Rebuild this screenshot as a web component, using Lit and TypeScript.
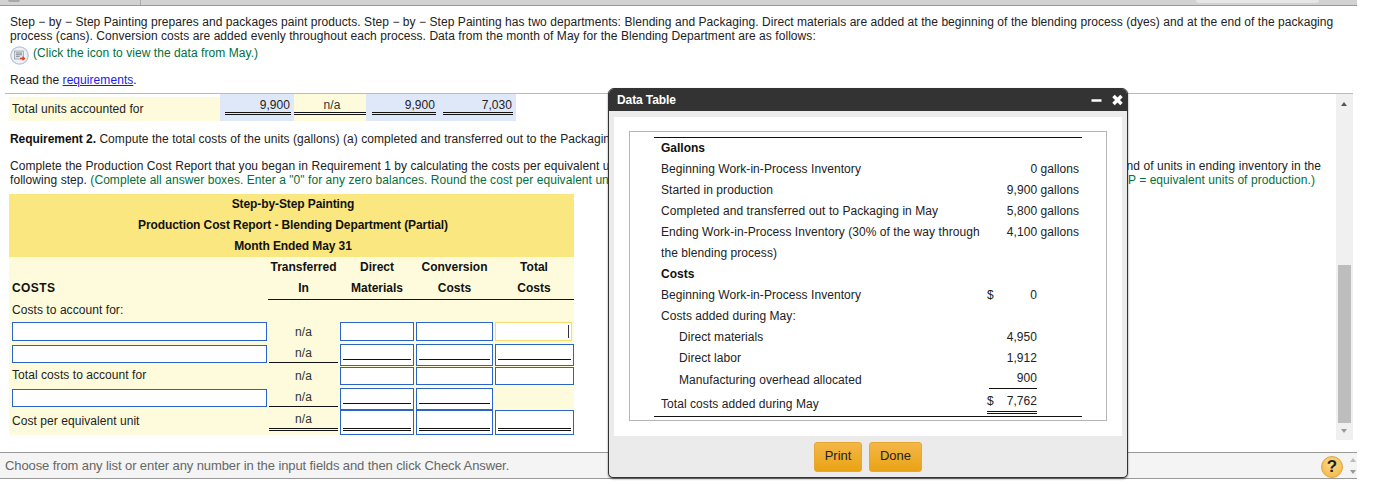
import { LitElement, html, css, nothing } from "lit";
import { customElement } from "lit/decorators.js";

type CostRow = { label: string; cls?: string; sym?: string; amt?: string; value?: string };

const dataRows: CostRow[] = [
  { label: "Gallons", cls: "b" },
  { label: "Beginning Work-in-Process Inventory", value: "0 gallons" },
  { label: "Started in production", value: "9,900 gallons" },
  { label: "Completed and transferred out to Packaging in May", value: "5,800 gallons" },
  { label: "Ending Work-in-Process Inventory (30% of the way through the blending process)", value: "4,100 gallons" },
  { label: "Costs", cls: "b" },
  { label: "Beginning Work-in-Process Inventory", sym: "$", amt: "0" },
  { label: "Costs added during May:" },
  { label: "Direct materials", cls: "ind", amt: "4,950" },
  { label: "Direct labor", cls: "ind", amt: "1,912" },
  { label: "Manufacturing overhead allocated", cls: "ind under", amt: "900" },
];

@customElement("app-root")
export class AppRoot extends LitElement {
  static styles = css`
    :host { display: block; width: 1382px; height: 484px; position: relative; overflow: hidden; background: #fff;
      font: 12px/14px "Liberation Sans", Arial, sans-serif; color: #222; letter-spacing: .06px; }
    .top { width: 1357px; height: 5px; background: #d2d2d2; border-bottom: 1px solid #999; display: flex; }
    .top .nub { width: 12px; height: 2px; margin-left: 8px; background: #a8a8a8; border-radius: 0 0 4px 4px; }
    .top .seg { width: 120px; border-right: 1px solid #aaa; }
    .top .tab { margin-left: 1055px; width: 123px; height: 3px; background: #e6e6e6; border-radius: 0 0 4px 4px; }
    .intro { padding: 9px 0 0 10px; height: 87px; box-sizing: border-box; width: 1345px; }
    .intro p { margin: 0; }
    .click { display: flex; align-items: flex-start; gap: 4px; color: #00703c; height: 20px; margin-top: 2px; }
    .click svg { margin-top: 1px; flex: none; }
    .click span { margin-top: 1px; }
    .read { margin-top: 8px !important; }
    a { color: #1a1ae6; text-decoration: underline; }
    .main { position: relative; height: 347px; margin-left: 5px; width: 1348px; border-top: 1px solid #bbb; box-sizing: border-box; padding-left: 4px; }
    .units { display: grid; grid-template-columns: 211px 74px 72px 73px 77px; height: 27px; width: 507px; }
    .units > div { display: flex; align-items: flex-start; justify-content: flex-end; position: relative; }
    .units .lab { background: #fdfbdc; margin-top: 3px; padding-left: 3px; align-items: center; justify-content: flex-start; }
    .units .bl { background: #dfe8f8; }
    .units .pl { background: #fdfbdc; }
    .units span { display: block; text-align: right; border-bottom: 3px double #111; height: 14px; line-height: 14px; margin-top: 4px; box-sizing: content-box; padding-right: 1px; }
    .units .c1 { width: 65px; margin-right: 3px; }
    .units .c2 { width: 68px; margin-right: 0; text-align: center; padding: 0 0 0 4px; color: #333; }
    .units .c3 { width: 63px; margin-right: 3px; }
    .units .c4 { width: 69px; margin-right: 3px; }
    .req { margin: 11px 0 0 1px; white-space: nowrap; }
    .req b { color: #111; letter-spacing: -.05px; }
    .para { margin: 13px 0 0 1px; }
    .ln { display: flex; justify-content: space-between; white-space: nowrap; }
    .ln.a { padding-right: 32px; }
    .ln.g { padding-right: 38px; color: #00703c; }
    .ln.g i { font-style: normal; color: #222; }
    .tbl { display: grid; width: 565px; margin-top: 7px; grid-template-columns: 259px 71px 76px 79px 80px;
      grid-template-rows: 21px 21px 21px 21px 22px 21px 23px 22px 22px 22px 25px; background: #fdfbdc; }
    .hd { grid-column: 1 / -1; background: #fbe77f; font-weight: 700; color: #111; text-align: center; line-height: 21px; letter-spacing: -.1px; padding-left: 3px; }
    .ch { font-weight: 700; color: #111; text-align: center; line-height: 21px; letter-spacing: 0; }
    .ch.ul { border-bottom: 1px solid #111; height: 21px; box-sizing: content-box; }
    .cl { line-height: 21px; padding-left: 3px; }
    .cl.b { font-weight: 700; letter-spacing: .4px; color: #111; }
    .cl.t1 { line-height: 19px; }
    .cl.t2 { line-height: 23px; }
    .na { text-align: center; color: #333; margin: 0 1px; padding-bottom: 2px; box-sizing: border-box; display: flex; align-items: center; justify-content: center; }
    .na.s { border-bottom: 1px solid #111; height: 19px; padding-bottom: 0; }
    .na.d { border-bottom: 3px double #111; height: 21px; padding-bottom: 0; }
    .wide { background: #fff; border: 1px solid #2a64c8; margin: 1px 1px 3px 3px; box-sizing: border-box; }
    .in { background: #fff; border: 1px solid #2a64c8; box-sizing: border-box; margin: 1px 1px 3px 1px; }
    .in.last { margin-right: 0; }
    .in.f { border-color: #fbdc6f; position: relative; margin-right: 2px; }
    .in.f::after { content: ""; position: absolute; right: 2px; top: 2px; bottom: 2px; width: 1px; background: #333; }
    .box { background: #fff; border: 1px solid #2a64c8; box-sizing: border-box; margin: 0 1px; padding: 0 2px; display: flex; flex-direction: column; justify-content: flex-end; }
    .box.last { margin-right: 0; }
    .box::after { content: ""; display: block; margin-bottom: 5px; border-bottom: 1px solid #111; }
    .box.d::after { border-bottom: 3px double #111; margin-bottom: 3px; }
    .sb { position: absolute; right: 0; top: 0; width: 17px; height: 346px; background: #f0f0f0; }
    .thumb { position: absolute; left: 2px; top: 171px; width: 13px; height: 158px; background: #bdbdbd; }
    .arr { position: absolute; left: 5px; width: 0; height: 0; border-left: 3.5px solid transparent; border-right: 3.5px solid transparent; }
    .arr.u { top: 8px; border-bottom: 4px solid #555; }
    .arr.dn { top: 335px; border-top: 4px solid #999; }
    .foot { position: absolute; left: 0; top: 452px; width: 1357px; height: 27px; box-sizing: border-box; background: #f4f4f4; border-top: 1px solid #999; border-bottom: 1px solid #999; color: #666; display: flex; align-items: center; padding-left: 5px; font-size: 13px; letter-spacing: -.1px; }
    .help { position: absolute; left: 1321px; top: 456px; width: 22px; height: 22px; border-radius: 50%; box-sizing: border-box; border: 1px solid #dca640;
      background: radial-gradient(circle at 50% 35%, #fdd98a, #f3b440); color: #222; font: 700 17px/20px "Liberation Sans", sans-serif; text-align: center; }
    .sp { position: absolute; left: 1350px; width: 0; height: 0; border-left: 3.5px solid transparent; border-right: 3.5px solid transparent; }
    .sp.u { top: 458px; border-bottom: 4px solid #bbb; }
    .sp.dn { top: 470px; border-top: 4px solid #999; }
    .modal { position: absolute; left: 608px; top: 88px; width: 520px; height: 390px; box-sizing: border-box; background: #ebebeb; border: 1px solid #333; border-radius: 6px 6px 5px 5px; box-shadow: 0 1px 2px rgba(0,0,0,.5); display: flex; flex-direction: column; overflow: hidden; }
    .mh { height: 22px; flex: none; background: #333; color: #fff; font-weight: 700; display: flex; align-items: center; justify-content: space-between; padding: 0 0 0 8px; letter-spacing: -.1px; }
    .mh svg { display: block; }
    .mb { margin: 6px 5px 0 5px; height: 319px; background: #fff; padding: 14px 15px 0; box-sizing: border-box; flex: none; }
    .frame { border: 1px solid #b5b5b5; height: 290px; box-sizing: border-box; padding: 5px 24px 0; }
    .dt { border-top: 1px solid #111; border-bottom: 1px solid #111; padding: 0 3px 0 7px; height: 280px; box-sizing: border-box; }
    .r { display: flex; justify-content: space-between; line-height: 21px; }
    .r .l { width: 322px; }
    .r.b .l { font-weight: 700; color: #111; letter-spacing: 0; }
    .r.ind .l { padding-left: 18px; }
    .amt { width: 50px; margin-right: 42px; display: flex; justify-content: space-between; }
    .r.under { height: 19px; }
    .r.under .l { line-height: 22px; }
    .r.under .amt { border-bottom: 1px solid #111; height: 19px; line-height: 19px; }
    .r.tot .l { line-height: 32px; }
    .r.tot .amt { border-bottom: 3px double #111; height: 23px; line-height: 26px; }
    .btns { display: flex; justify-content: center; gap: 7px; margin-top: 6px; }
    button { font: 13px "Liberation Sans", Arial, sans-serif; color: #222; height: 30px; padding: 0 0 3px; border: 1px solid #e6a830; border-radius: 3px; background: linear-gradient(#f4b748, #e9a313); }
    .p { width: 48px; } .dn2 { width: 53px; }
  `;

  private na(extra = "") {
    return html`<div class="na ${extra}">n/a</div>`;
  }

  render() {
    return html`
      <div class="top"><div class="nub"></div><div class="seg"></div><div class="tab"></div></div>
      <div class="intro">
        <p>Step − by − Step Painting prepares and packages paint products. Step − by − Step Painting has two departments: Blending and Packaging. Direct materials are added at the beginning of the blending process (dyes) and at the end of the packaging process (cans). Conversion costs are added evenly throughout each process. Data from the month of May for the Blending Department are as follows:</p>
        <div class="click">
          <svg width="19" height="19" viewBox="0 0 19 19"><circle cx="9.500" cy="9.500" r="8.700" fill="#eef1f6" stroke="#b9c4d8" stroke-width="1.300"/><rect x="4.500" y="5" width="9" height="8" fill="#dfe2e6" stroke="#8f98a3" stroke-width=".7"/><path d="M6 7h6M6 8.700h6M6 10.400h3.500" stroke="#6f7986" stroke-width=".8"/><path d="M10 12.500h4M12.500 10.800l2 1.700-2 1.700" stroke="#d8452a" stroke-width="1.300" fill="none"/></svg>
          <span>(Click the icon to view the data from May.)</span>
        </div>
        <p class="read">Read the <a>requirements</a>.</p>
      </div>
      <div class="main">
        <div class="units">
          <div class="lab">Total units accounted for</div>
          <div class="bl"><span class="c1">9,900</span></div>
          <div class="pl"><span class="c2">n/a</span></div>
          <div class="bl"><span class="c3">9,900</span></div>
          <div class="bl"><span class="c4">7,030</span></div>
        </div>
        <p class="req"><b>Requirement 2.</b> Compute the total costs of the units (gallons) (a) completed and transferred out to the Packaging</p>
        <div class="para">
          <div class="ln a"><span>Complete the Production Cost Report that you began in Requirement 1 by calculating the costs per equivalent unit</span><span>kind of units in ending inventory in the</span></div>
          <div class="ln g"><span><i>following step.</i> (Complete all answer boxes. Enter a "0" for any zero balances. Round the cost per equivalent unit</span><span>EUP = equivalent units of production.)</span></div>
        </div>
        <div class="tbl">
          <div class="hd">Step-by-Step Painting</div>
          <div class="hd">Production Cost Report - Blending Department (Partial)</div>
          <div class="hd">Month Ended May 31</div>
          <div></div><div class="ch">Transferred</div><div class="ch">Direct</div><div class="ch">Conversion</div><div class="ch">Total</div>
          <div class="cl b">COSTS</div><div class="ch ul">In</div><div class="ch ul">Materials</div><div class="ch ul">Costs</div><div class="ch ul">Costs</div>
          <div class="cl" style="grid-column: 1 / -1">Costs to account for:</div>
          <div class="wide"></div>${this.na()}<div class="in"></div><div class="in"></div><div class="in f"></div>
          <div class="wide"></div>${this.na("s")}<div class="box"></div><div class="box"></div><div class="box last"></div>
          <div class="cl t1">Total costs to account for</div>${this.na()}<div class="in"></div><div class="in"></div><div class="in last"></div>
          <div class="wide"></div>${this.na("s")}<div class="box"></div><div class="box"></div><div></div>
          <div class="cl t2">Cost per equivalent unit</div>${this.na("d")}<div class="box d"></div><div class="box d"></div><div class="box d last"></div>
        </div>
        <div class="sb"><div class="thumb"></div><div class="arr u"></div><div class="arr dn"></div></div>
      </div>
      <div class="foot">Choose from any list or enter any number in the input fields and then click Check Answer.</div>
      <div class="help">?</div>
      <div class="sp u"></div><div class="sp dn"></div>
      <div class="modal">
        <div class="mh">
          <span>Data Table</span>
          <svg width="38" height="14" viewBox="0 0 38 14"><path d="M2.500 7.500h10" stroke="#fff" stroke-width="2.500"/><path d="M24.500 3l8 8M32.500 3l-8 8" stroke="#fff" stroke-width="3.500"/></svg>
        </div>
        <div class="mb"><div class="frame"><div class="dt">
          ${dataRows.map((r) => html`<div class="r ${r.cls ?? ""}">
            <div class="l">${r.label}</div>
            ${r.value ? html`<div>${r.value}</div>` : nothing}
            ${r.amt ? html`<div class="amt"><span>${r.sym ?? ""}</span><span>${r.amt}</span></div>` : nothing}
          </div>`)}
          <div class="r tot"><div class="l">Total costs added during May</div><div class="amt"><span>$</span><span>7,762</span></div></div>
        </div></div></div>
        <div class="btns"><button class="p">Print</button><button class="dn2">Done</button></div>
      </div>
    `;
  }
}
